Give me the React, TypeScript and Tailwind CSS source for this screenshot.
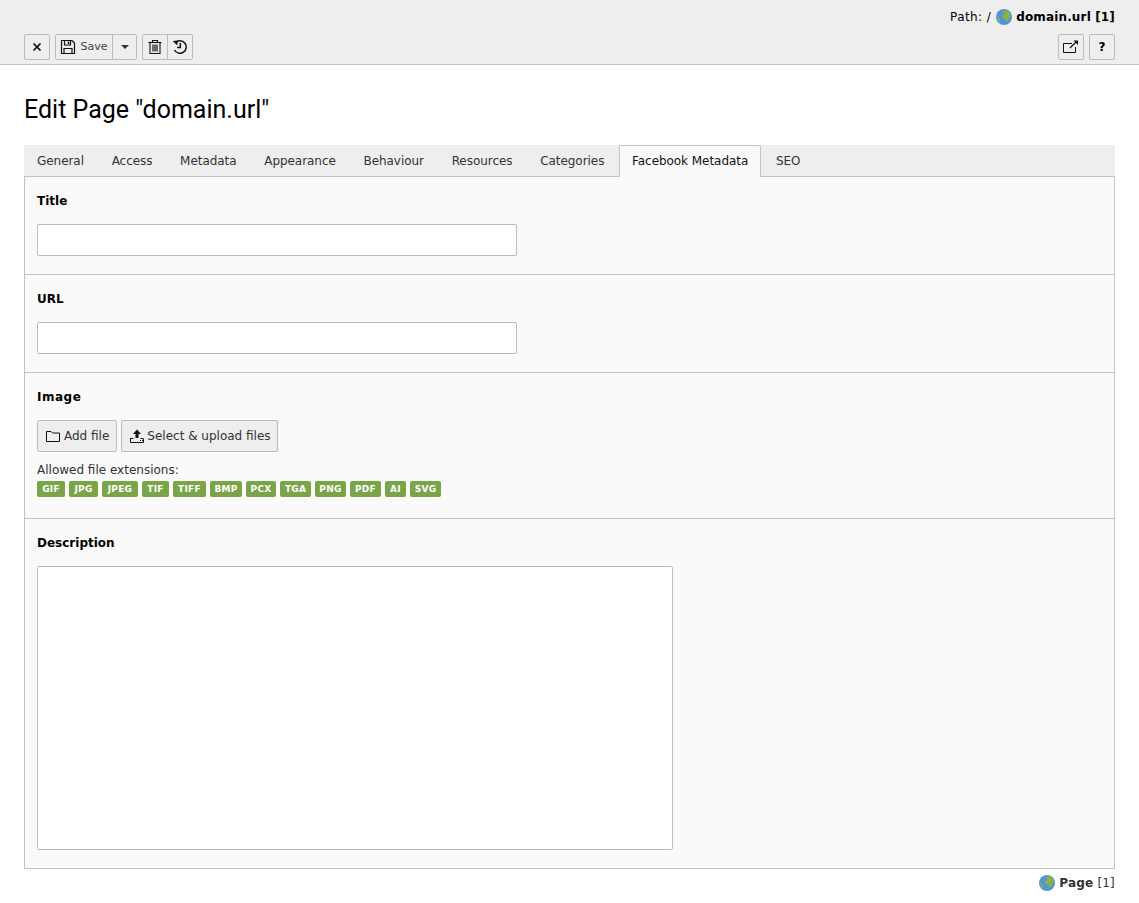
import React from "react";
import { X } from "lucide-react";

const tabs = ["General", "Access", "Metadata", "Appearance", "Behaviour", "Resources", "Categories", "Facebook Metadata", "SEO"];
const extensions = [
  { name: "GIF", width: "w-[28px]" },
  { name: "JPG", width: "w-[29px]" },
  { name: "JPEG", width: "w-[36px]" },
  { name: "TIF", width: "w-[27px]" },
  { name: "TIFF", width: "w-[33px]" },
  { name: "BMP", width: "w-[32px]" },
  { name: "PCX", width: "w-[30px]" },
  { name: "TGA", width: "w-[31px]" },
  { name: "PNG", width: "w-[31px]" },
  { name: "PDF", width: "w-[31px]" },
  { name: "AI", width: "w-[21px]" },
  { name: "SVG", width: "w-[31px]" },
];

const Globe = () => (
  <svg width="16" height="16" viewBox="0 0 16 16" className="shrink-0">
    <circle cx="8" cy="8" r="8" fill="#4f94dc" />
    <path d="M7 2 L11 1.2 L14 4 L14.5 7.5 L12.5 11 L10 13 L9.5 10 L7 9 L5.5 7 L7.5 5 L9 5.5 Z" fill="#8cb33c" />
    <path d="M1 7.5 L3 8.5 L4.5 12 L3.5 13 L1.5 10.5 Z" fill="#8cb33c" />
  </svg>
);

const SaveIcon = () => (
  <svg width="16" height="16" viewBox="0 0 16 16" fill="none" stroke="#111" strokeWidth="1.2">
    <path d="M1.5 1.5 H12 L14.5 4 V14.5 H1.5 Z" />
    <path d="M4.5 1.5 V6 H10.5 V1.5" />
    <path d="M8.5 2.5 V5" strokeWidth="1.5" />
    <path d="M4 14.5 V9.5 H12 V14.5" />
  </svg>
);

const TrashIcon = () => (
  <svg width="16" height="16" viewBox="0 0 16 16" fill="none" stroke="#111" strokeWidth="1.1">
    <path d="M1.5 3.5 H14.5" />
    <path d="M5.5 3.5 V1.5 H10.5 V3.5" />
    <path d="M3 3.5 V14.5 H13 V3.5" />
    <path d="M6 5.5 V12.5 M8 5.5 V12.5 M10 5.5 V12.5" strokeWidth="1.2" />
  </svg>
);

const HistoryIcon = () => (
  <svg width="16" height="16" viewBox="0 0 16 16" fill="none" stroke="#111" strokeWidth="1.5">
    <path d="M3.4 3.6 A6.3 6.3 0 1 1 2.4 11" />
    <path d="M0.8 2 L5.8 1.4 L5.2 6.4 Z" fill="#111" stroke="none" />
    <path d="M8.3 4 V8.5 H5" />
  </svg>
);

const OpenIcon = () => (
  <svg width="16" height="16" viewBox="0 0 16 16" fill="none" stroke="#111" strokeWidth="1">
    <path d="M9 4.5 H0.5 V13.5 H12.5 V8" />
    <path d="M7 9 L13 3" strokeWidth="1.2" />
    <path d="M10.5 1.5 H15 V6 Z" fill="#111" stroke="none" />
  </svg>
);

const FolderIcon = () => (
  <svg width="16" height="16" viewBox="0 0 16 16" fill="none" stroke="#111" strokeWidth="1">
    <path d="M1.5 3.5 H6 L7.5 5 H14.5 V13.5 H1.5 Z" />
  </svg>
);

const UploadIcon = () => (
  <svg width="16" height="16" viewBox="0 0 16 16" fill="none">
    <path d="M8 1.5 L12 6 H9.5 V10 H6.5 V6 H4 Z" fill="#111" />
    <path d="M1 10.5 H4.5 M11.5 10.5 H14 M1.5 10.5 V14.5 H14.5 V10.5" stroke="#111" />
    <path d="M11 12.5 H12 M13 12.5 H14" stroke="#111" />
  </svg>
);

const btn = "flex items-center justify-center h-[26px] bg-[#eeeeee] border border-[#bbbbbb] rounded-[2px]";

const Section = ({ label, children }: { label: string; children: React.ReactNode }) => (
  <section className="px-3 pt-[17px] pb-[18px] border-b border-[#c3c3c3] last:border-b-0">
    <h3 className="font-bold text-xs leading-[15px] text-black mb-[15px]">{label}</h3>
    {children}
  </section>
);

export default function App() {
  return (
    <div className="min-h-[903px] bg-white font-['DejaVu_Sans',sans-serif] text-xs text-[#333333]">
      <header className="h-[65px] bg-[#eeeeee] border-b border-[#c3c3c3] px-6 pt-[9px]">
        <div className="flex justify-end items-center gap-1 h-4 text-black">
          <span className="mr-px tracking-[0.4px]">Path: /</span>
          <Globe />
          <strong className="font-bold tracking-[0.15px]">domain.url [1]</strong>
        </div>
        <div className="flex justify-between mt-[9px]">
          <div className="flex gap-[5px]">
            <button className={`${btn} w-[26px]`}>
              <X size={12} strokeWidth={3.5} color="#111" />
            </button>
            <div className="flex">
              <button className={`${btn} w-[58px] gap-1 rounded-r-none text-[11px] text-[#444444]`}>
                <SaveIcon />
                Save
              </button>
              <button className={`${btn} w-[25px] -ml-px rounded-l-none`}>
                <svg width="8" height="4" viewBox="0 0 8 4"><path d="M0 0 H8 L4 4 Z" fill="#333" /></svg>
              </button>
            </div>
            <div className="flex">
              <button className={`${btn} w-[26px] rounded-r-none`}><TrashIcon /></button>
              <button className={`${btn} w-[26px] -ml-px rounded-l-none`}><HistoryIcon /></button>
            </div>
          </div>
          <div className="flex gap-[5px]">
            <button className={`${btn} w-[26px]`}><OpenIcon /></button>
            <button className={`${btn} w-[26px] font-bold text-black`}>?</button>
          </div>
        </div>
      </header>

      <main className="px-6">
        <h1 className="mt-[29px] mb-[20px] text-[25px] leading-[31px] text-black font-['Roboto',sans-serif]">
          Edit Page "domain.url"
        </h1>

        <div className="flex h-8 bg-[#eeeeee]">
          {tabs.map((tab) => (
            <div
              key={tab}
              className={
                tab === "Facebook Metadata"
                  ? "px-3 mr-[1.7px] leading-[30px] h-8 border border-b-0 border-[#c3c3c3] rounded-t-[2px] bg-[#fafafa] text-[#111111] tracking-[-0.05px] relative z-10"
                  : "px-3 mr-[1.7px] leading-[30px] h-8 border border-transparent border-b-0 text-[#333333] tracking-[-0.05px]"
              }
            >
              {tab}
            </div>
          ))}
        </div>

        <div className="border border-[#c3c3c3] bg-[#fafafa] -mt-px">
          <Section label="Title">
            <input className="block w-[480px] h-8 bg-white border border-[#bbbbbb] rounded-[2px]" />
          </Section>
          <Section label="URL">
            <input className="block w-[480px] h-8 bg-white border border-[#bbbbbb] rounded-[2px]" />
          </Section>
          <section className="px-3 pt-[17px] pb-[21px] border-b border-[#c3c3c3]">
            <h3 className="font-bold text-xs leading-[15px] text-black mb-[15px] tracking-[0.5px]">Image</h3>
            <div className="flex gap-1">
              <button className={`${btn} !h-8 px-[7px] gap-[3px] text-[#333333]`}>
                <FolderIcon />
                Add file
              </button>
              <button className={`${btn} !h-8 pl-[7px] pr-[6px] gap-[2px] text-[#333333]`}>
                <UploadIcon />
                Select &amp; upload files
              </button>
            </div>
            <p className="mt-[11px] leading-[15px]">Allowed file extensions:</p>
            <div className="flex gap-1 mt-[3px]">
              {extensions.map((ext) => (
                <span
                  key={ext.name}
                  className={`${ext.width} h-4 leading-4 text-center rounded-[2px] bg-[#79a548] text-white font-bold text-[9px] tracking-[0.25px]`}
                >
                  {ext.name}
                </span>
              ))}
            </div>
          </section>
          <Section label="Description">
            <textarea className="block w-[636px] h-[284px] bg-white border border-[#bbbbbb] rounded-[2px] resize-none" />
          </Section>
        </div>

        <div className="flex justify-end items-center gap-1 mt-[6px] text-[#333333] tracking-[0.2px]">
          <Globe />
          <span><strong className="font-bold">Page</strong> [1]</span>
        </div>
      </main>
    </div>
  );
}
